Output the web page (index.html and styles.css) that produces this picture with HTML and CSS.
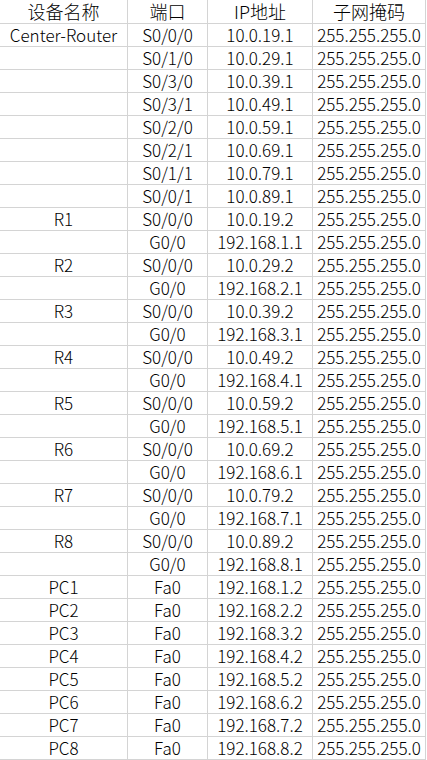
FILE: index.html
```html
<!DOCTYPE html>
<html lang="zh-CN">
<head>
<meta charset="utf-8">
<link rel="stylesheet" href="styles.css">
</head>
<body>
<div class="sheet">
  <div class="c h">设备名称</div><div class="c h">端口</div><div class="c h">IP地址</div><div class="c h">子网掩码</div>
  <div class="c">Center-Router</div><div class="c">S0/0/0</div><div class="c">10.0.19.1</div><div class="c">255.255.255.0</div>
  <div class="c"></div><div class="c">S0/1/0</div><div class="c">10.0.29.1</div><div class="c">255.255.255.0</div>
  <div class="c"></div><div class="c">S0/3/0</div><div class="c">10.0.39.1</div><div class="c">255.255.255.0</div>
  <div class="c"></div><div class="c">S0/3/1</div><div class="c">10.0.49.1</div><div class="c">255.255.255.0</div>
  <div class="c"></div><div class="c">S0/2/0</div><div class="c">10.0.59.1</div><div class="c">255.255.255.0</div>
  <div class="c"></div><div class="c">S0/2/1</div><div class="c">10.0.69.1</div><div class="c">255.255.255.0</div>
  <div class="c"></div><div class="c">S0/1/1</div><div class="c">10.0.79.1</div><div class="c">255.255.255.0</div>
  <div class="c"></div><div class="c">S0/0/1</div><div class="c">10.0.89.1</div><div class="c">255.255.255.0</div>
  <div class="c">R1</div><div class="c">S0/0/0</div><div class="c">10.0.19.2</div><div class="c">255.255.255.0</div>
  <div class="c"></div><div class="c">G0/0</div><div class="c">192.168.1.1</div><div class="c">255.255.255.0</div>
  <div class="c">R2</div><div class="c">S0/0/0</div><div class="c">10.0.29.2</div><div class="c">255.255.255.0</div>
  <div class="c"></div><div class="c">G0/0</div><div class="c">192.168.2.1</div><div class="c">255.255.255.0</div>
  <div class="c">R3</div><div class="c">S0/0/0</div><div class="c">10.0.39.2</div><div class="c">255.255.255.0</div>
  <div class="c"></div><div class="c">G0/0</div><div class="c">192.168.3.1</div><div class="c">255.255.255.0</div>
  <div class="c">R4</div><div class="c">S0/0/0</div><div class="c">10.0.49.2</div><div class="c">255.255.255.0</div>
  <div class="c"></div><div class="c">G0/0</div><div class="c">192.168.4.1</div><div class="c">255.255.255.0</div>
  <div class="c">R5</div><div class="c">S0/0/0</div><div class="c">10.0.59.2</div><div class="c">255.255.255.0</div>
  <div class="c"></div><div class="c">G0/0</div><div class="c">192.168.5.1</div><div class="c">255.255.255.0</div>
  <div class="c">R6</div><div class="c">S0/0/0</div><div class="c">10.0.69.2</div><div class="c">255.255.255.0</div>
  <div class="c"></div><div class="c">G0/0</div><div class="c">192.168.6.1</div><div class="c">255.255.255.0</div>
  <div class="c">R7</div><div class="c">S0/0/0</div><div class="c">10.0.79.2</div><div class="c">255.255.255.0</div>
  <div class="c"></div><div class="c">G0/0</div><div class="c">192.168.7.1</div><div class="c">255.255.255.0</div>
  <div class="c">R8</div><div class="c">S0/0/0</div><div class="c">10.0.89.2</div><div class="c">255.255.255.0</div>
  <div class="c"></div><div class="c">G0/0</div><div class="c">192.168.8.1</div><div class="c">255.255.255.0</div>
  <div class="c">PC1</div><div class="c">Fa0</div><div class="c">192.168.1.2</div><div class="c">255.255.255.0</div>
  <div class="c">PC2</div><div class="c">Fa0</div><div class="c">192.168.2.2</div><div class="c">255.255.255.0</div>
  <div class="c">PC3</div><div class="c">Fa0</div><div class="c">192.168.3.2</div><div class="c">255.255.255.0</div>
  <div class="c">PC4</div><div class="c">Fa0</div><div class="c">192.168.4.2</div><div class="c">255.255.255.0</div>
  <div class="c">PC5</div><div class="c">Fa0</div><div class="c">192.168.5.2</div><div class="c">255.255.255.0</div>
  <div class="c">PC6</div><div class="c">Fa0</div><div class="c">192.168.6.2</div><div class="c">255.255.255.0</div>
  <div class="c">PC7</div><div class="c">Fa0</div><div class="c">192.168.7.2</div><div class="c">255.255.255.0</div>
  <div class="c">PC8</div><div class="c">Fa0</div><div class="c">192.168.8.2</div><div class="c">255.255.255.0</div>
</div>
</body>
</html>
```
FILE: styles.css
```css
html, body {
  margin: 0;
  padding: 0;
  background: #fff;
}
.sheet {
  display: grid;
  grid-template-columns: 128px 80px 105px 113px;
  grid-template-rows: 24px;
  grid-auto-rows: 23px;
  width: 426px;
  font-family: "Noto Sans CJK SC", "Noto Sans", sans-serif;
  font-size: 17px;
  font-weight: 300;
  color: #000;
}
.c {
  box-sizing: border-box;
  border-right: 1px solid #d4d4d4;
  border-bottom: 1px solid #d4d4d4;
  display: flex;
  align-items: flex-end;
  justify-content: center;
  line-height: 20px;
  padding-bottom: 1px;
  white-space: nowrap;
}
.h {
  font-size: 18px;
  line-height: 21px;
  padding-bottom: 1px;
}
```
